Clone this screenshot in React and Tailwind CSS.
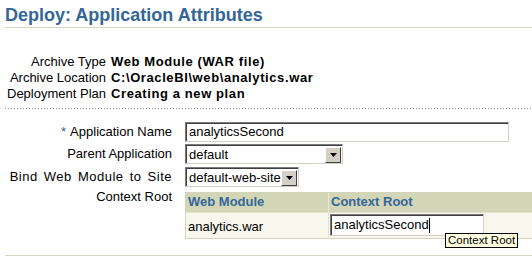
// Deploy: Application Attributes — Oracle BLAF style form
const sunken =
  "border border-t-[#7b7b7b] border-l-[#7b7b7b] border-r-[#d4d0c8] border-b-[#d4d0c8] shadow-[inset_1px_1px_0_#404040]";

function Select({ value, width }) {
  return (
    <div className={`flex items-center h-[20px] bg-white ${sunken} ${width}`}>
      <span className="flex-1 pl-[3px] pt-[1px] leading-[16px] whitespace-nowrap">{value}</span>
      <span className="flex items-center justify-center w-[16px] h-[16px] mr-[1px] mt-[1px] bg-[#d4d0c8] border border-t-white border-l-white border-r-[#404040] border-b-[#404040]">
        <svg width="7" height="4" viewBox="0 0 7 4" aria-hidden>
          <path d="M0 0h7L3.5 4z" fill="#000" />
        </svg>
      </span>
    </div>
  );
}

function InfoRow({ label, value }) {
  return (
    <div className="flex leading-[16px]">
      <span className="w-[106px] text-right">{label}</span>
      <span className="ml-[5px] font-bold tracking-[0.6px] whitespace-nowrap">{value}</span>
    </div>
  );
}

function FormRow({ label, required, children, className = "", labelClass = "" }) {
  return (
    <div className={`flex items-center h-[20px] ${className}`}>
      <span className={`w-[172px] text-right whitespace-nowrap ${labelClass}`}>
        {required && <span className="text-[#336699] mr-[4px]">*</span>}
        {label}
      </span>
      <div className="ml-[13px]">{children}</div>
    </div>
  );
}

export default function App() {
  return (
    <div className="relative w-[532px] h-[266px] overflow-hidden bg-white text-[13px] text-black font-['Liberation_Sans',Arial,sans-serif]">
      {/* Title */}
      <div className="ml-[5px] pt-[5px] h-[28px] border-b border-[#d6d6c2]">
        <h1 className="text-[18px] leading-[20px] font-bold text-[#336699]">
          Deploy: Application Attributes
        </h1>
      </div>

      {/* Archive info */}
      <div className="mt-[26px]">
        <InfoRow label="Archive Type" value="Web Module (WAR file)" />
        <InfoRow label="Archive Location" value="C:\OracleBI\web\analytics.war" />
        <InfoRow label="Deployment Plan" value="Creating a new plan" />
      </div>

      <div className="ml-[5px] mt-[6px] h-[1px] bg-[linear-gradient(to_right,#8a8a8a_1px,transparent_1px)] bg-[length:3px_1px]" />

      {/* Form */}
      <div className="mt-[13px]">
        <FormRow label="Application Name" required>
          <div className={`w-[324px] h-[20px] bg-white pl-[3px] leading-[18px] ${sunken}`}>
            analyticsSecond
          </div>
        </FormRow>
        <FormRow label="Parent Application" className="mt-[2px]">
          <Select value="default" width="w-[158px]" />
        </FormRow>
        <FormRow
          label="Bind Web Module to Site"
          className="mt-[3px]"
          labelClass="tracking-[0.5px] [word-spacing:2px]"
        >
          <Select value="default-web-site" width="w-[114px]" />
        </FormRow>

        <div className="flex items-start mt-[5px]">
          <span className="w-[172px] text-right leading-[16px] -mt-[3px]">Context Root</span>
          <div className="ml-[13px] flex-1 border border-[#d2d4bc] border-r-0">
            <div className="flex h-[19px] bg-[#d3d6b6] font-bold text-[#336699] leading-[18px]">
              <div className="w-[143px] pl-[2px] border-r border-[#e6e8d6]">Web Module</div>
              <div className="flex-1 pl-[2px]">Context Root</div>
            </div>
            <div className="flex h-[26px] bg-[#f7f7ee] border-t border-[#e2e4d0]">
              <div className="w-[143px] pl-[2px] pt-[6px] leading-[16px] border-r border-[#e2e4d0]">
                analytics.war
              </div>
              <div className="flex-1 pl-[1px] pt-[1px]">
                <div className={`flex items-center w-[154px] h-[22px] bg-white pl-[3px] ${sunken}`}>
                  <span className="leading-[16px]">analyticsSecond</span>
                  <span className="w-[1px] h-[15px] bg-black" />
                </div>
              </div>
            </div>
          </div>
        </div>
      </div>

      <div className="ml-[5px] mt-[16px] border-t border-[#d6d6c2]" />

      {/* Tooltip */}
      <div className="absolute left-[445px] top-[233px] h-[15px] border border-black bg-[#ffffe1] text-[11.5px] leading-[13px] px-[2px] whitespace-nowrap">
        Context Root
      </div>
    </div>
  );
}
